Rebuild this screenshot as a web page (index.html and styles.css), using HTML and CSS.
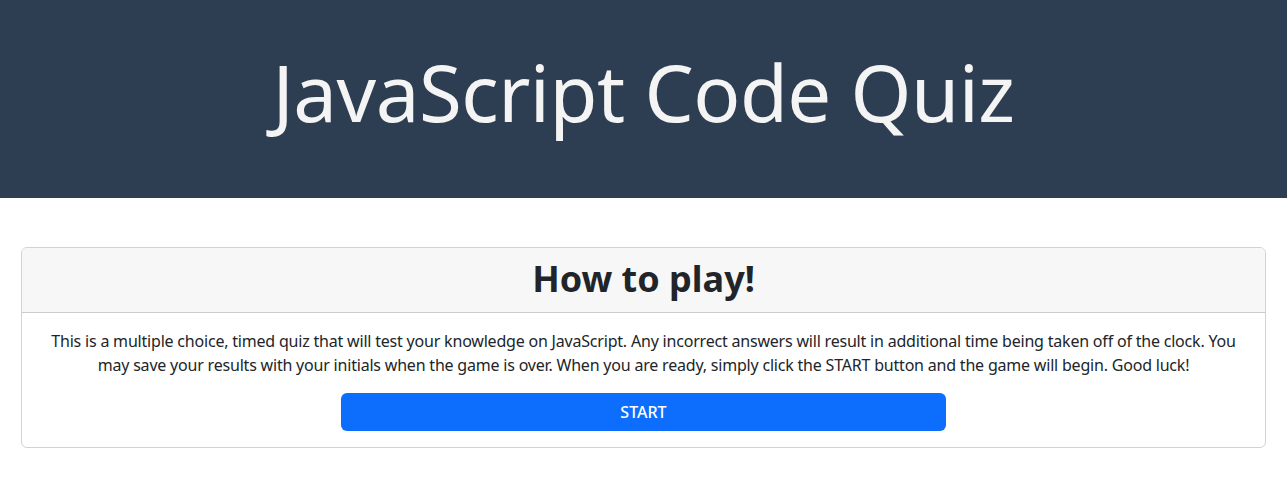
FILE: index.html
```html
<!DOCTYPE html>
<html lang="en">
<head>
<meta charset="utf-8">
<title>JavaScript Code Quiz</title>
<link rel="stylesheet" href="styles.css">
</head>
<body>
<header class="banner">
  <h1 class="banner-title">JavaScript Code Quiz</h1>
</header>
<main class="content">
  <section class="card">
    <div class="card-header">
      <h2 class="card-title">How to play!</h2>
    </div>
    <div class="card-body">
      <p class="card-text">This is a multiple choice, timed quiz that will test your knowledge on JavaScript. Any incorrect answers will result in additional time being taken off of the clock. You may save your results with your initials when the game is over. When you are ready, simply click the START button and the game will begin. Good luck!</p>
      <button class="start-btn" type="button">START</button>
    </div>
  </section>
</main>
</body>
</html>
```

FILE: styles.css
```css
* { box-sizing: border-box; }
html, body { margin: 0; padding: 0; }
body {
  font-family: "Noto Sans", "Open Sans", sans-serif;
  color: #212529;
  background: #fff;
}
.banner {
  background: #2e3e52;
  height: 198px;
  display: flex;
  align-items: center;
  justify-content: center;
  padding-bottom: 14px;
}
.banner-title {
  margin: 0;
  color: #f4f4f4;
  font-weight: 400;
  font-size: 78px;
  letter-spacing: -0.5px;
}
.content {
  padding: 49px 21px 0 21px;
}
.card {
  border: 1px solid rgba(0,0,0,0.175);
  border-radius: 6px;
  overflow: hidden;
}
.card-header {
  background: #f7f7f7;
  border-bottom: 1px solid rgba(0,0,0,0.175);
  height: 65px;
  display: flex;
  align-items: center;
  justify-content: center;
  padding-bottom: 4px;
}
.card-title {
  margin: 0;
  font-size: 36px;
  font-weight: 700;
  color: #212529;
}
.card-body {
  padding: 16px;
  display: flex;
  flex-direction: column;
  align-items: center;
}
.card-text {
  margin: 0 0 16px;
  font-size: 16px;
  line-height: 24px;
  letter-spacing: -0.2px;
  text-align: center;
  color: #212529;
}
.start-btn {
  width: 50%;
  height: 38px;
  border: 0;
  border-radius: 6px;
  background: #0d6efd;
  color: #fff;
  font-family: inherit;
  font-size: 16px;
  font-weight: 500;
}
```
